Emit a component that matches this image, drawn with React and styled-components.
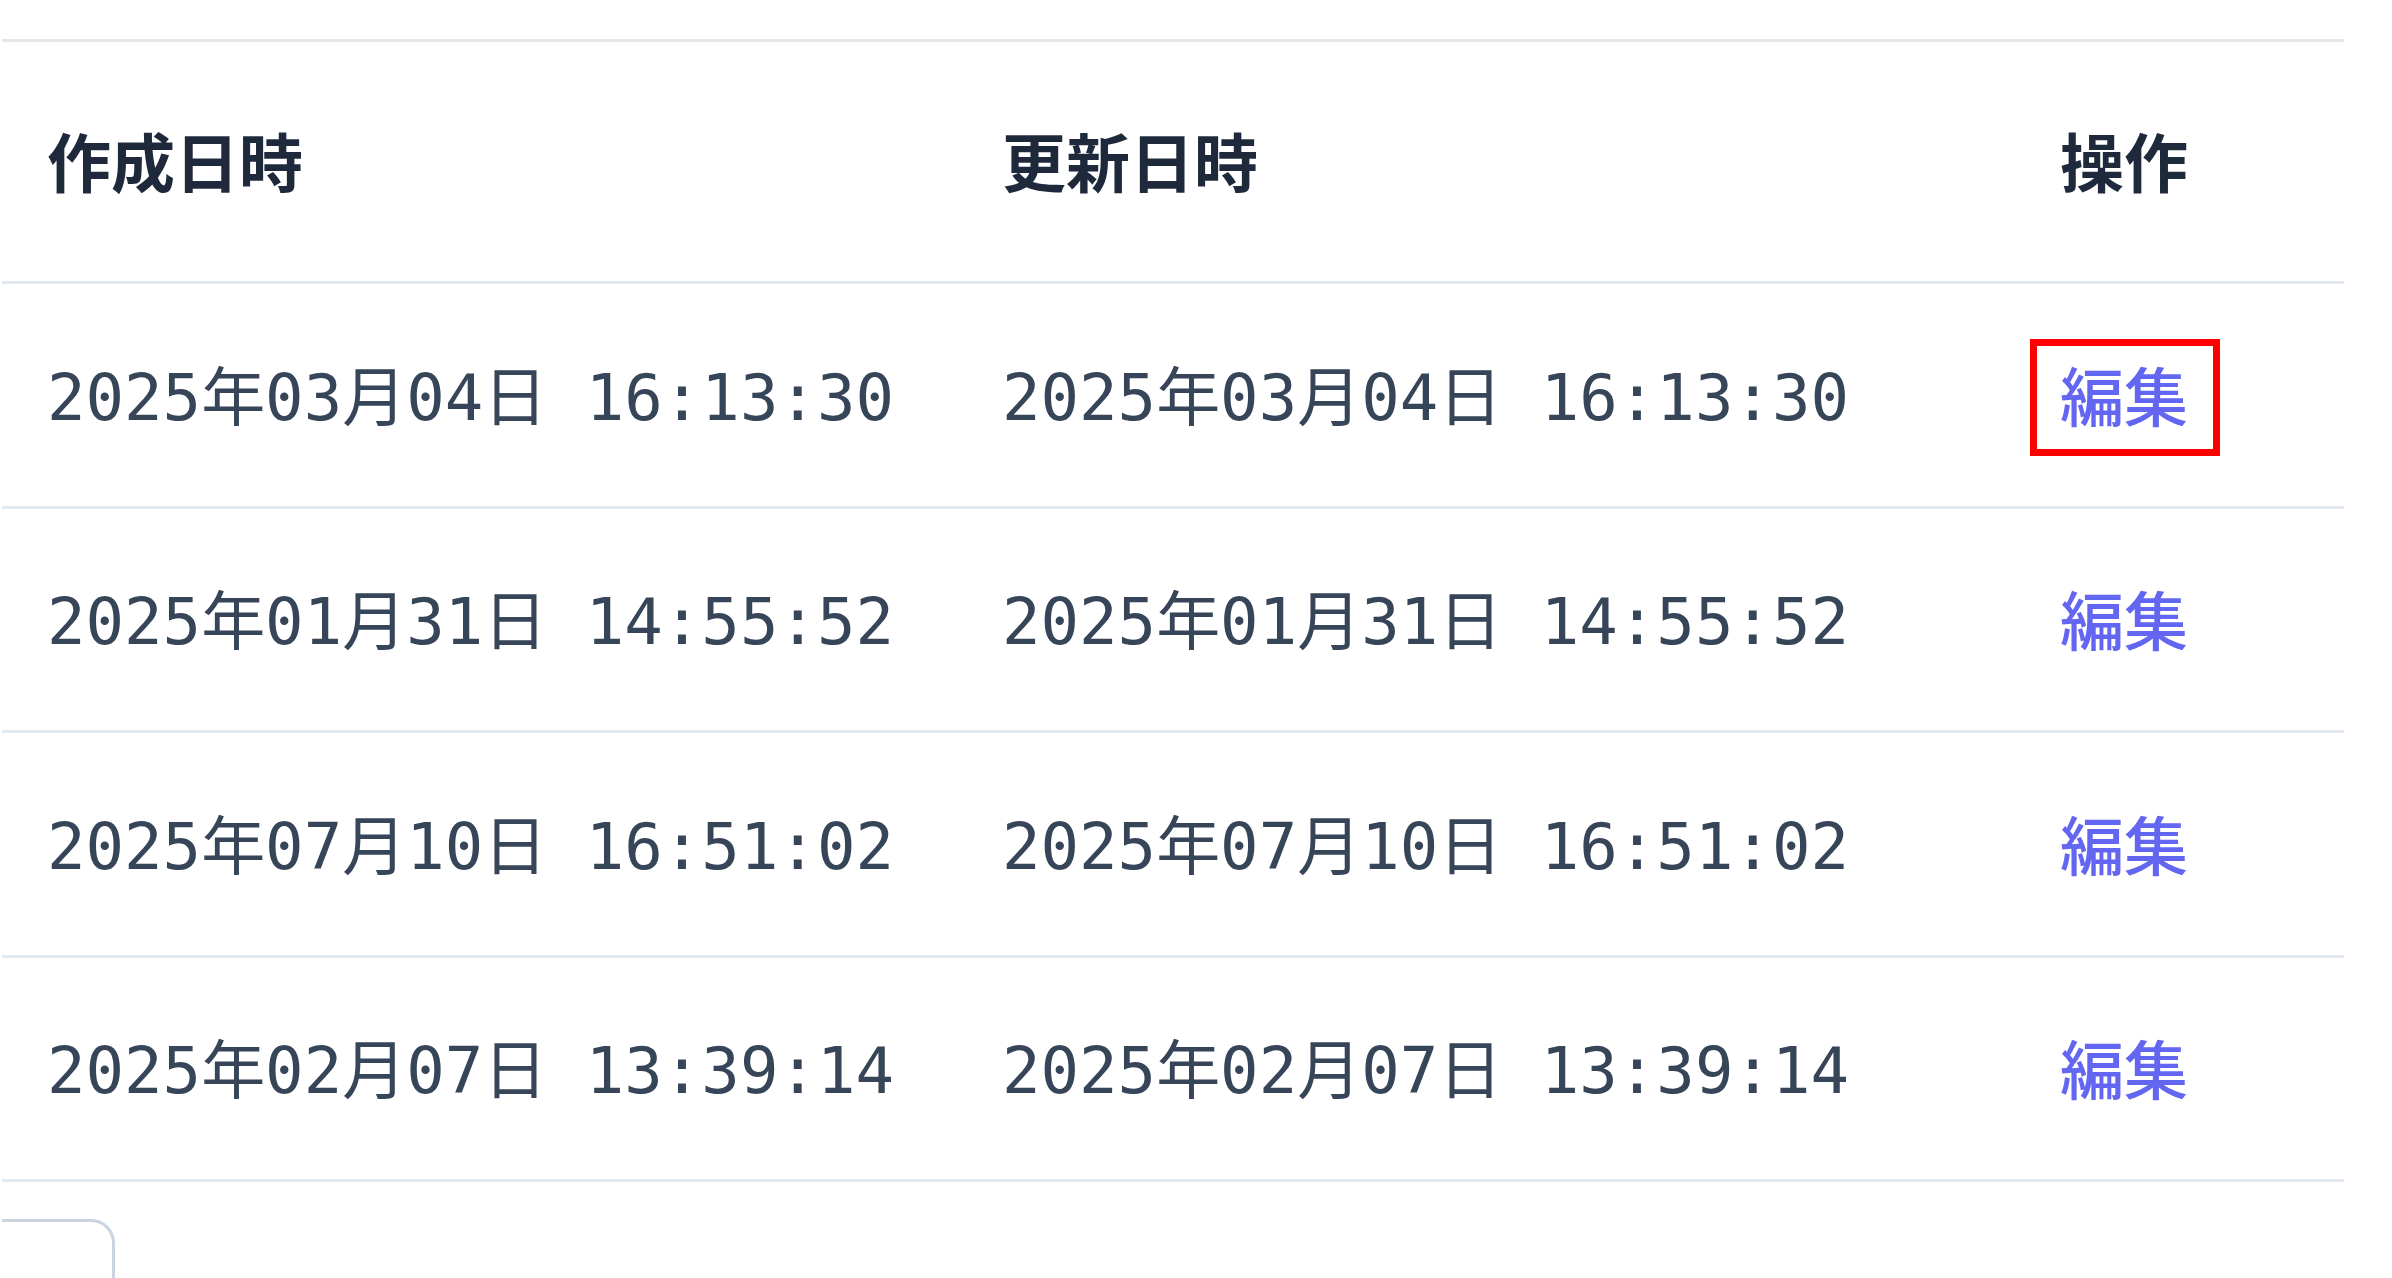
import styled, { createGlobalStyle } from 'styled-components';

const GlobalStyle = createGlobalStyle`
	html, body {
		margin: 0;
		padding: 0;
		background: #ffffff;
		overflow: hidden;
	}

	body {
		font-family: "Noto Sans CJK JP", "Noto Sans", sans-serif;
	}
`;

const rows = [
	{ created: '2025年03月04日 16:13:30', updated: '2025年03月04日 16:13:30', highlighted: true },
	{ created: '2025年01月31日 14:55:52', updated: '2025年01月31日 14:55:52' },
	{ created: '2025年07月10日 16:51:02', updated: '2025年07月10日 16:51:02' },
	{ created: '2025年02月07日 13:39:14', updated: '2025年02月07日 13:39:14' },
];

const Page = styled.div`
	display: flex;
	flex-direction: column;
	padding: 39px 48px 0 2px;
	width: 2342px;
`;

const Table = styled.div`
	display: flex;
	flex-direction: column;
	border-top: 3px solid #e5e7eb;
`;

const Row = styled.div`
	display: grid;
	grid-template-columns: 955px 1058px 1fr;
	align-items: center;
	box-sizing: border-box;
	height: ${({ $head }) => ($head ? '242px' : '224.5px')};
	border-bottom: 3px solid #e2e8f0;
`;

const HeadCell = styled.div`
	padding: 0 0 6px 45px;
	font-family: "Noto Sans CJK JP", "Noto Sans", sans-serif;
	font-size: 64px;
	font-weight: 700;
	line-height: 1;
	color: #1e293b;
`;

const DateCell = styled.div`
	padding: 6px 0 0 45px;
	font-family: "DejaVu Sans Mono", "Noto Sans CJK JP", monospace;
	font-size: 64px;
	line-height: 1;
	color: #374559;
	white-space: pre;
`;

const ActionCell = styled.div`
	padding: 0 0 3px 45px;
`;

const EditLink = styled.a`
	position: relative;
	display: inline-block;
	font-family: "Noto Sans CJK JP", "Noto Sans", sans-serif;
	font-size: 64px;
	font-weight: 500;
	line-height: 1;
	color: #6366f1;
	text-decoration: none;
	cursor: pointer;

	${({ $highlighted }) =>
		$highlighted &&
		`
		&::after {
			content: '';
			position: absolute;
			top: -22px;
			bottom: -31px;
			left: -30px;
			right: -32px;
			border: 7px solid #ff0000;
		}
	`}
`;

const Pager = styled.div`
	margin-top: 37px;
	width: 113px;
	height: 80px;
	box-sizing: border-box;
	border-top: 3px solid #cbd5e1;
	border-right: 3px solid #cbd5e1;
	border-top-right-radius: 24px;
`;

export default function App() {
	return (
		<>
			<GlobalStyle />
			<Page>
				<Table>
					<Row $head>
						<HeadCell>作成日時</HeadCell>
						<HeadCell>更新日時</HeadCell>
						<HeadCell>操作</HeadCell>
					</Row>
					{rows.map((row, i) => (
						<Row key={i}>
							<DateCell>{row.created}</DateCell>
							<DateCell>{row.updated}</DateCell>
							<ActionCell>
								<EditLink $highlighted={row.highlighted}>編集</EditLink>
							</ActionCell>
						</Row>
					))}
				</Table>
				<Pager />
			</Page>
		</>
	);
}
